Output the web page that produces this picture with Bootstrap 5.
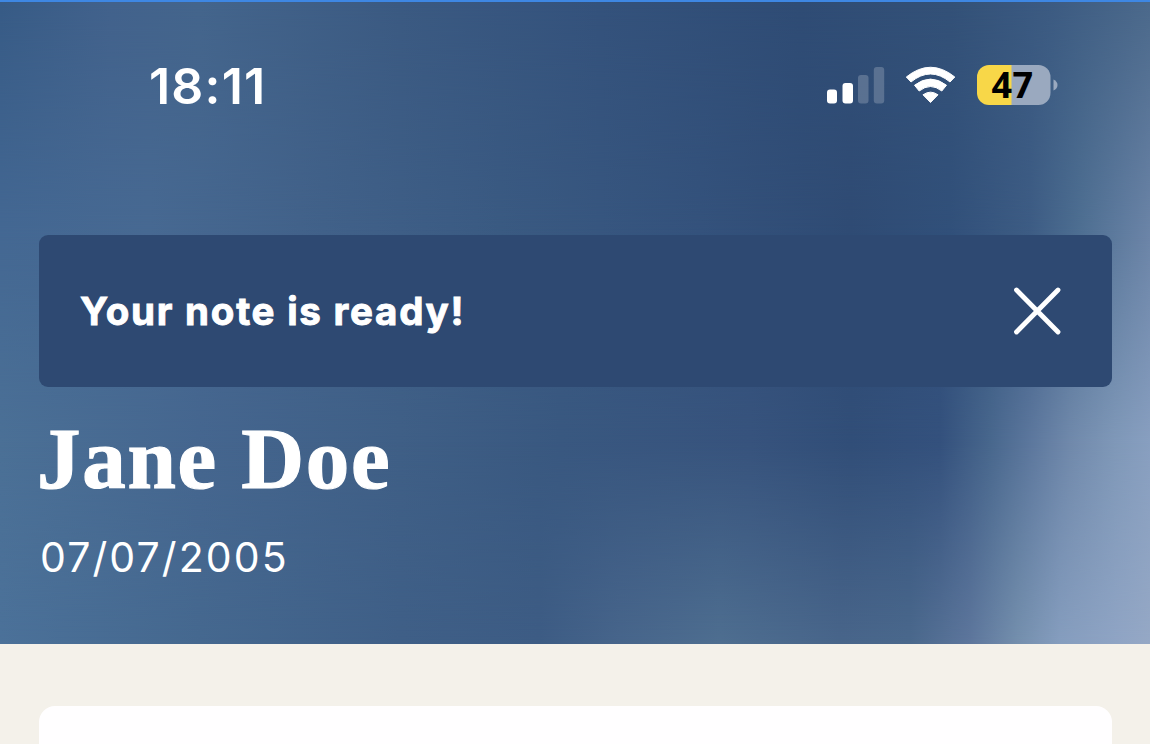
<!doctype html>
<html lang="en">
<head>
    <meta charset="utf-8">
    <meta name="viewport" content="width=device-width, initial-scale=1">
    <title>Jane Doe</title>
    <link href="https://cdn.jsdelivr.net/npm/bootstrap@5.3.3/dist/css/bootstrap.min.css" rel="stylesheet">
    <style>
        body {
            background-color: #f4f1ea;
            font-family: Inter, "Liberation Sans", sans-serif;
            height: 744px;
            overflow: hidden;
        }
        .profile-header {
            height: 644px;
            padding: 0 38px 0 39px;
            border-top: 2px solid #3e87e3;
            background: linear-gradient(90deg, #375b86 0, #42628c 110px, #44658c 200px, #3b5a82 400px, #34527c 600px, #2f4c75 800px, #335178 950px, #3c5b82 1050px, #4b698b 1150px);
            color: #fff;
            isolation: isolate;
        }
        /* Colour bands that fade into each other from top to bottom */
        .band {
            z-index: -1;
        }
        .band-upper {
            background: linear-gradient(90deg, #446893 0, #476992 150px, #42628a 300px, #3a5a82 500px, #34527c 700px, #2f4b74 850px, #31507a 950px, #3d5c84 1030px, #4e6f92 1080px, #6c85a8 1150px);
            -webkit-mask-image: linear-gradient(transparent 0, #000 235px);
            mask-image: linear-gradient(transparent 0, #000 235px);
        }
        .band-middle {
            background: linear-gradient(90deg, #4b7096 0, #45668f 200px, #3f5f86 400px, #395880 560px, #37537d 750px, #314e78 850px, #34517d 940px, #48678d 990px, #5c779d 1030px, #7089ab 1070px, #7f98b8 1115px, #889fc0 1150px);
            -webkit-mask-image: linear-gradient(transparent 235px, #000 440px);
            mask-image: linear-gradient(transparent 235px, #000 440px);
        }
        .band-lower {
            background: linear-gradient(90deg, #4b7199 0, #45688f 200px, #3f5f87 400px, #3d5c84 540px, #47658b 620px, #4e6e90 720px, #48658a 840px, #4a688c 910px, #5d769c 970px, #748fad 1018px, #859dbe 1060px, #8fa4c4 1117px, #95a8c5 1150px);
            -webkit-mask-image: linear-gradient(transparent 440px, #000 640px);
            mask-image: linear-gradient(transparent 440px, #000 640px);
        }
        .status-bar {
            height: 233px;
            padding: 58px 52px 0 110px;
        }
        .clock {
            padding-top: 2px;
            font-size: 50px;
            font-weight: 600;
            line-height: 48px;
            letter-spacing: 1.2px;
        }
        .battery-level {
            font: 700 36px/40px "Open Sans", "Noto Sans", sans-serif;
            letter-spacing: 0.5px;
        }
        .notice {
            height: 152px;
            padding: 0 50px 0 41px;
            border-radius: 9px;
            background-color: #2e4972;
        }
        .notice-text {
            font-size: 38.5px;
            font-weight: 700;
            line-height: 48px;
            letter-spacing: 1.75px;
            -webkit-text-stroke: 0.9px #fff;
        }
        .patient-name {
            margin: 21px 0 0 -2px;
            font: 700 87px/102px "Liberation Serif", serif;
            letter-spacing: 1.7px;
            -webkit-text-stroke: 1.2px #fff;
        }
        .birth-date {
            margin: 23px 0 0 1px;
            font-size: 41px;
            font-weight: 400;
            line-height: 48px;
            letter-spacing: 2.1px;
        }
        .note-panel {
            height: 60px;
            margin: 62px 38px 0 39px;
            border-radius: 16px;
            background-color: #fffeff;
        }
    </style>
</head>
<body>
    <header class="profile-header position-relative">
        <div class="band band-upper position-absolute top-0 start-0 w-100 h-100"></div>
        <div class="band band-middle position-absolute top-0 start-0 w-100 h-100"></div>
        <div class="band band-lower position-absolute top-0 start-0 w-100 h-100"></div>

        <!-- Status Bar -->
        <div class="status-bar d-flex justify-content-between align-items-start">
            <div class="clock">18:11</div>
            <svg width="234" height="48" viewBox="826 60 234 48" role="img" aria-label="Signal, Wi-Fi and battery">
                <g fill="#fff">
                    <rect x="827" y="89.500" width="10" height="14" rx="3"/>
                    <rect x="842.500" y="83" width="10.500" height="20.500" rx="3"/>
                    <g opacity=".2">
                        <rect x="858" y="75" width="10.500" height="28.500" rx="3"/>
                        <rect x="873.800" y="67" width="10.400" height="36.500" rx="3"/>
                    </g>
                </g>
                <g fill="#fff" stroke="#fff" stroke-linejoin="round">
                    <path d="M906.300 77Q930.500 57.500 954.800 77L950 82Q930.500 66 911 82Z"/>
                    <path d="M914.500 85.200Q930.500 73 946.500 85.200L941.800 91Q930.500 82 919.200 91Z"/>
                    <path d="M923 94.800Q930.500 89.500 938 94.800L930.500 102.500Z"/>
                </g>
                <clipPath id="batteryShape"><rect x="977" y="65" width="73.500" height="40" rx="12"/></clipPath>
                <g clip-path="url(#batteryShape)">
                    <path fill="#9aa9bf" d="M1011 65h41v40h-41z"/>
                    <path fill="#f8d748" d="M976 65h35.500v40H976z"/>
                </g>
                <path fill="#9aa9bf" d="M1053.500 79.500q4 2 4 5.500t-4 5.500z"/>
                <text class="battery-level" x="991.500" y="97.500" fill="#000">47</text>
            </svg>
        </div>

        <!-- Notification -->
        <div class="notice d-flex align-items-center justify-content-between">
            <div class="notice-text">Your note is ready!</div>
            <svg width="50" height="50" viewBox="0 0 50 50" fill="none" stroke="#fff" stroke-width="4.800" stroke-linecap="round" role="button" aria-label="Close">
                <path d="M4.500 4 46 46M46 4 4.500 46"/>
            </svg>
        </div>

        <h1 class="patient-name">Jane Doe</h1>
        <div class="birth-date">07/07/2005</div>
    </header>

    <main>
        <div class="note-panel"></div>
    </main>

    <script src="https://cdn.jsdelivr.net/npm/bootstrap@5.3.3/dist/js/bootstrap.bundle.min.js"></script>
</body>
</html>
